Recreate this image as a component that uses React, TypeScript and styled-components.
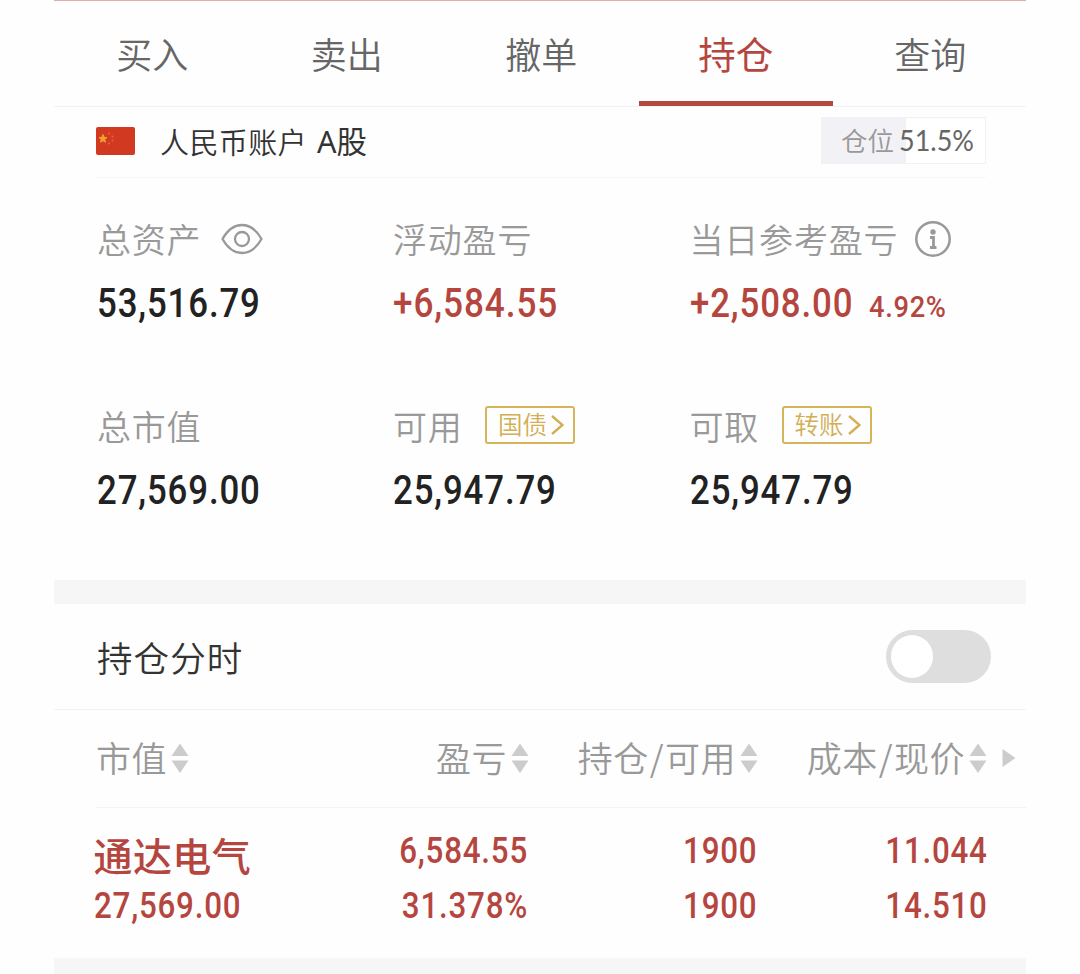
import React from 'react';
import styled, { createGlobalStyle } from 'styled-components';

const GlobalStyle = createGlobalStyle`
  * { box-sizing: border-box; }
  body {
    margin: 0;
    background: #fefefe;
    font-family: "Noto Sans CJK SC", sans-serif;
    font-weight: 350;
    color: #333;
  }
`;

const RED = '#b5463f';

const Screen = styled.main`
  width: 972px;
  height: 974px;
  margin: 0 auto;
  overflow: hidden;
  display: flex;
  flex-direction: column;
  border-top: 1px solid #e3adab;
`;

const Tabs = styled.nav`
  height: 106px;
  flex: none;
  padding-left: 1px;
  display: grid;
  grid-template-columns: repeat(5, 194.5px);
  border-bottom: 1px solid #f2f2f2;
`;

const Tab = styled.div<{ $active?: boolean }>`
  display: flex;
  justify-content: center;
  height: 105px;
  line-height: 104px;
  font-size: ${(p) => (p.$active ? 37.5 : 36)}px;
  font-weight: ${(p) => (p.$active ? 400 : 350)};
  color: ${(p) => (p.$active ? RED : '#666')};
  border-bottom: 5px solid ${(p) => (p.$active ? '#b34843' : 'transparent')};
`;

const Account = styled.header`
  height: 71px;
  flex: none;
  margin: 0 40px 0 42px;
  display: flex;
  align-items: flex-start;
  border-bottom: 1px solid #f7f7f7;
`;

const Flag = styled.svg`
  width: 39px;
  height: 28px;
  margin-top: 20px;
`;

const AccountName = styled.div`
  display: flex;
  margin-left: 25px;
  font-size: 29px;
  line-height: 69px;
  letter-spacing: 0.4px;
  white-space: nowrap;
`;

const Market = styled.span`
  margin-left: 10px;
  letter-spacing: 0;
  font-family: "Noto Sans", "Noto Sans CJK SC", sans-serif;
  font-size: 30.5px;
  font-weight: 400;
`;

const Position = styled.div<{ $share: number }>`
  margin: 10px 0 0 auto;
  width: 165px;
  height: 47px;
  padding: 0 0 2px 19px;
  display: flex;
  align-items: center;
  border: 1px solid #f1f0f3;
  background: linear-gradient(to right, #f2f1f5 ${(p) => p.$share}%, #fff ${(p) => p.$share}%);
  font-size: 26.5px;
  line-height: 42px;
  color: #999;
  white-space: nowrap;
`;

const Share = styled.span`
  margin-left: 5px;
  font-family: Lato, sans-serif;
  font-weight: 400;
  font-size: 29px;
  color: #666;
  transform: scaleX(0.93);
  transform-origin: left;
`;

const Summary = styled.section`
  height: 402px;
  flex: none;
  padding: 37px 0 0 43px;
  display: grid;
  grid-template-columns: 296px 296.5px 1fr;
  grid-template-rows: 187px 187px;
`;

const Label = styled.div`
  height: 48px;
  padding-bottom: 2px;
  display: flex;
  align-items: center;
  font-size: 34px;
  letter-spacing: 0.8px;
  color: #999;
  white-space: nowrap;
`;

const ValueRow = styled.div`
  height: 78px;
  display: flex;
  align-items: baseline;
  line-height: 81px;
`;

const Num = styled.span<{ $size: number; $color?: string; $scale?: number; $end?: boolean }>`
  font-family: Roboto, sans-serif;
  font-size: ${(p) => p.$size}px;
  font-weight: 500;
  letter-spacing: ${(p) => p.$size / 40}px;
  color: ${(p) => p.$color ?? '#222'};
  transform: scaleX(${(p) => p.$scale ?? 0.87});
  transform-origin: ${(p) => (p.$end ? 'right' : 'left')};
  white-space: nowrap;
`;

const Percent = styled(Num)`
  margin-left: -8px;
`;

const EyeIcon = styled.svg`
  width: 42px;
  height: 32px;
  margin: 2px 0 0 20px;
`;

const InfoIcon = styled.svg`
  width: 38px;
  height: 38px;
  margin: 2px 0 0 16px;
`;

const LinkTag = styled.span`
  width: 90px;
  height: 38px;
  margin: 0 0 0 22.5px;
  padding: 0 0 2px 11px;
  display: flex;
  align-items: center;
  border: 2px solid #d6b459;
  border-radius: 3px;
  font-size: 24.5px;
  letter-spacing: 0;
  line-height: 32px;
  color: #d2ae55;
`;

const Chevron = styled.svg`
  width: 13px;
  height: 22px;
  margin: 2px 0 0 4px;
`;

const Band = styled.div`
  height: 24px;
  flex: none;
  background: #f6f6f6;
`;

const ToggleRow = styled.section`
  height: 106px;
  flex: none;
  padding: 0 35px 0 43px;
  display: flex;
  align-items: center;
  justify-content: space-between;
  border-bottom: 1px solid #f2f2f2;
  font-size: 35.5px;
  letter-spacing: 1.1px;
  line-height: 104px;
`;

const Switch = styled.div`
  width: 105px;
  height: 53px;
  padding: 5px;
  border-radius: 27px;
  background: #dedede;
`;

const Knob = styled.div`
  width: 42px;
  height: 43px;
  border-radius: 50%;
  background: #fff;
`;

const TableHead = styled.div`
  height: 98px;
  flex: none;
  margin: 0 0 0 42px;
  display: grid;
  grid-template-columns: 203px 230px 229px 229px 1fr;
  border-bottom: 1px solid #f3f3f3;
  font-size: 35px;
  letter-spacing: 0.5px;
  color: #999;
  line-height: 94px;
`;

const HeadCell = styled.div<{ $end?: boolean }>`
  height: 94px;
  display: flex;
  align-items: center;
  justify-content: ${(p) => (p.$end ? 'flex-end' : 'flex-start')};
  white-space: nowrap;
`;

const Slash = styled.span`
  padding: 0 1px;
`;

const SortIcon = styled.svg`
  width: 18px;
  height: 30px;
  flex: none;
  margin: 1px 0 0 4px;
`;

const MoreIcon = styled.svg`
  width: 14px;
  height: 18px;
  margin: 1px 0 0 15px;
`;

const Holding = styled.div`
  height: 150px;
  flex: none;
  padding: 15px 0 0 39.5px;
  display: grid;
  grid-template-columns: 204.5px 230px 229px 231px;
  grid-template-rows: 55px 55px;
  color: ${RED};
  line-height: 56px;
`;

const Cell = styled.div<{ $end?: boolean }>`
  display: flex;
  justify-content: ${(p) => (p.$end ? 'flex-end' : 'flex-start')};
  white-space: nowrap;
`;

const StockName = styled.div`
  padding-top: 3px;
  font-size: 39px;
  letter-spacing: 0.4px;
  font-weight: 500;
  white-space: nowrap;
`;

const Sort = () => (
  <SortIcon viewBox="0 0 18 30" fill="#ccc">
    <path d="M9 0.5 17.5 13H0.5ZM0.5 17.5H17.5L9 30Z" />
  </SortIcon>
);

const Arrow = () => (
  <Chevron viewBox="0 0 13 22" fill="none" stroke="#d2ae55" strokeWidth="2.4">
    <path d="M1 2 11.5 11 1 20" />
  </Chevron>
);

const tabs = ['买入', '卖出', '撤单', '持仓', '查询'];
const heads = [['盈亏'], ['持仓', '可用'], ['成本', '现价']];
const cells = ['6,584.55', '1900', '11.044', '31.378%', '1900', '14.510'];

export default function App() {
  return (
    <>
      <GlobalStyle />
      <Screen>
        <Tabs>
          {tabs.map((t) => (
            <Tab key={t} $active={t === '持仓'}>{t}</Tab>
          ))}
        </Tabs>
        <Account>
          <Flag viewBox="0 0 39 28">
            <rect width="39" height="28" rx="2" fill="#d13a20" />
            <path d="M7 7.5 8.1 10.3 11 10.5 8.8 12.4 9.5 15.2 7 13.7 4.5 15.2 5.2 12.4 3 10.5 5.9 10.3Z" fill="#f0a030" stroke="#f0a030" />
            <g fill="#e8642c">
              <circle cx="13" cy="6.5" r="1.1" />
              <circle cx="16.5" cy="9.5" r="1.1" />
              <circle cx="16.5" cy="13.5" r="1.1" />
              <circle cx="13" cy="16.5" r="1.1" />
            </g>
          </Flag>
          <AccountName>人民币账户<Market>A股</Market></AccountName>
          <Position $share={51.5}>
            仓位<Share>51.5%</Share>
          </Position>
        </Account>
        <Summary>
          <div>
            <Label>
              总资产
              <EyeIcon viewBox="0 0 42 32" fill="none" stroke="#999" strokeWidth="2.3">
                <path d="M1.5 16C6 8 12.500 2 21 2S36 8 40.5 16C36 24 29.500 30 21 30S6 24 1.5 16Z" strokeLinejoin="round" />
                <circle cx="21" cy="16" r="7" />
              </EyeIcon>
            </Label>
            <ValueRow><Num $size={40}>53,516.79</Num></ValueRow>
          </div>
          <div>
            <Label>浮动盈亏</Label>
            <ValueRow><Num $size={40} $color={RED} $scale={0.88}>+6,584.55</Num></ValueRow>
          </div>
          <div>
            <Label>
              当日参考盈亏
              <InfoIcon viewBox="0 0 38 38" fill="none" stroke="#999" strokeWidth="2.5">
                <circle cx="19" cy="19" r="16.7" />
                <circle cx="19" cy="12" r="2.7" fill="#999" stroke="none" />
                <path d="M16 17.500H19.500V27.500M16 27.500H22.500" strokeWidth="2.8" />
              </InfoIcon>
            </Label>
            <ValueRow>
              <Num $size={40} $color={RED}>+2,508.00</Num>
              <Percent $size={30} $color={RED} $scale={0.91}>4.92%</Percent>
            </ValueRow>
          </div>
          <div>
            <Label>总市值</Label>
            <ValueRow><Num $size={40}>27,569.00</Num></ValueRow>
          </div>
          <div>
            <Label>可用<LinkTag>国债<Arrow /></LinkTag></Label>
            <ValueRow><Num $size={40}>25,947.79</Num></ValueRow>
          </div>
          <div>
            <Label>可取<LinkTag>转账<Arrow /></LinkTag></Label>
            <ValueRow><Num $size={40}>25,947.79</Num></ValueRow>
          </div>
        </Summary>
        <Band />
        <ToggleRow>
          持仓分时
          <Switch><Knob /></Switch>
        </ToggleRow>
        <TableHead>
          <HeadCell>市值<Sort /></HeadCell>
          {heads.map(([first, second]) => (
            <HeadCell key={first} $end>
              {first}
              {second && <><Slash>/</Slash>{second}</>}
              <Sort />
            </HeadCell>
          ))}
          <HeadCell>
            <MoreIcon viewBox="0 0 14 18" fill="#ccc"><path d="M0.5 0 13.5 9 0.5 18Z" /></MoreIcon>
          </HeadCell>
        </TableHead>
        <Holding>
          <StockName>通达电气</StockName>
          {cells.slice(0, 3).map((c, i) => (
            <Cell key={i} $end><Num $size={36} $color={RED} $end>{c}</Num></Cell>
          ))}
          <Cell><Num $size={36} $color={RED}>27,569.00</Num></Cell>
          {cells.slice(3).map((c, i) => (
            <Cell key={i} $end><Num $size={36} $color={RED} $end>{c}</Num></Cell>
          ))}
        </Holding>
        <Band />
      </Screen>
    </>
  );
}
